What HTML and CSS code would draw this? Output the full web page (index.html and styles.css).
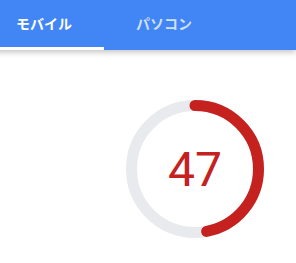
FILE: index.html
```html
<!DOCTYPE html>
<html lang="ja">
<head>
    <meta charset="UTF-8">
    <title>スコア</title>
    <link rel="stylesheet" href="styles.css">
</head>
<body>
    <div class="tabs">
        <div class="tab active">モバイル</div>
        <div class="tab">パソコン</div>
    </div>

    <div class="score-area">
        <div class="gauge">
            <svg width="138" height="138" viewBox="0 0 138 138">
                <circle class="gauge-base" cx="69" cy="69" r="63.5"></circle>
                <!-- 47% of the circumference, starting at 12 o'clock -->
                <circle class="gauge-arc" cx="69" cy="69" r="63.5"
                        stroke-dasharray="187.5 399" transform="rotate(-90 69 69)"></circle>
            </svg>
            <div class="gauge-value">47</div>
        </div>
    </div>
</body>
</html>
```
FILE: styles.css
```css
body {
    margin: 0;
    padding: 0;
    background: #fff;
    font-family: 'Noto Sans CJK JP', 'Noto Sans', sans-serif;
}

.tabs {
    display: flex;
    height: 50px;
    margin-left: -16px;
    background: #4285f4;
    box-shadow: 0 2px 6px rgba(0, 0, 0, 0.25);
}

.tab {
    position: relative;
    padding: 0 32px;
    line-height: 46px;
    font-size: 14px;
    font-weight: bold;
    color: rgba(255, 255, 255, 0.75);
}

.tab.active {
    color: #fff;
}

.tab.active::after {
    content: "";
    position: absolute;
    left: 0;
    right: 0;
    bottom: 0;
    height: 3px;
    background: #fff;
}

.score-area {
    display: flex;
    justify-content: flex-end;
    padding: 50px 32px 0 0;
}

.gauge {
    position: relative;
    width: 138px;
    height: 138px;
}

.gauge svg {
    display: block;
}

.gauge-base {
    fill: none;
    stroke: #e8eaed;
    stroke-width: 11;
}

.gauge-arc {
    fill: none;
    stroke: #c5221f;
    stroke-width: 11;
    stroke-linecap: round;
}

.gauge-value {
    position: absolute;
    top: 0;
    left: 0;
    right: 0;
    bottom: 0;
    display: flex;
    align-items: center;
    justify-content: center;
    font-family: Roboto, 'Liberation Sans', sans-serif;
    font-size: 48px;
    color: #c5221f;
}
```
